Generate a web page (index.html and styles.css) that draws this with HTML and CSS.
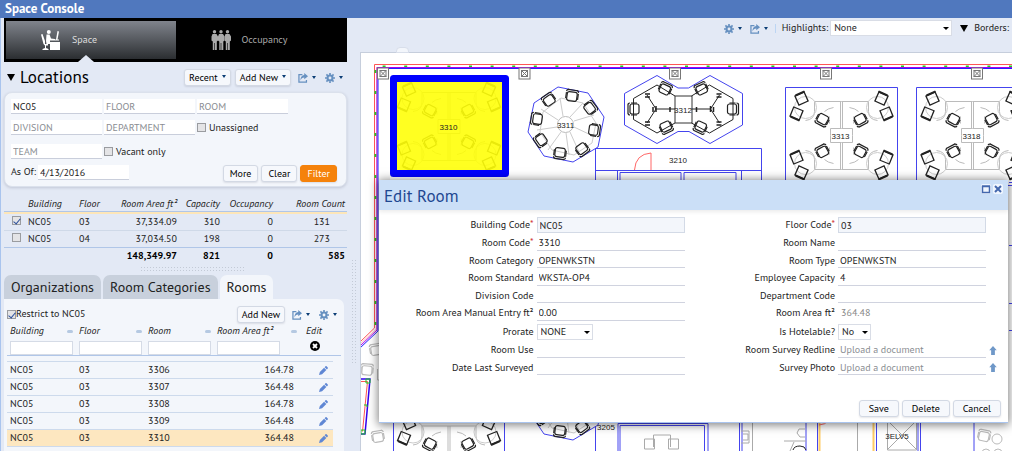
FILE: index.html
```html
<!DOCTYPE html>
<html lang="en">
<head>
    <meta charset="UTF-8">
    <meta name="viewport" content="width=device-width, initial-scale=1.0">
    <title>Space Console</title>
    <link rel="stylesheet" href="styles.css">
</head>
<body>
    <!-- Shared icons -->
    <svg class="sprite" aria-hidden="true">
        <symbol id="icon-gear" viewBox="0 0 16 16">
            <circle cx="8" cy="8" r="4" fill="none" stroke="currentColor" stroke-width="3.4"/>
            <path d="M8 0v3M8 13v3M0 8h3M13 8h3M2.3 2.3l2.2 2.2M11.5 11.5l2.2 2.2M13.7 2.3l-2.2 2.2M4.5 11.5l-2.2 2.2" stroke="currentColor" stroke-width="2.6"/>
        </symbol>
        <symbol id="icon-share" viewBox="0 0 16 16">
            <path d="M7 2.5H1.500v12h12V11" fill="none" stroke="currentColor" stroke-width="2"/>
            <path d="M10 0l6 5-6 5V7C7 7 5 8.500 4 12 3.500 7 6 3.500 10 3z" fill="currentColor"/>
        </symbol>
        <symbol id="icon-pencil" viewBox="0 0 16 16">
            <path d="M0 16l1.500-5.500L9 3l4 4-7.500 7.500zM10 2l1.500-1.500q1-1 2 0L15.500 2.500q1 1 0 2L14 6z" fill="currentColor"/>
        </symbol>
        <symbol id="icon-up" viewBox="0 0 10 12">
            <path d="M5 0l5 5.500H7.500V12h-5V5.500H0z" fill="currentColor"/>
        </symbol>
    </svg>

    <header class="titlebar">
        <h1>Space Console</h1>
    </header>

    <div class="console">
        <aside class="sidebar">
            <nav class="modes">
                <a href="#space" class="mode active">
                    <svg class="mode-icon" viewBox="0 0 20 20">
                        <circle cx="7.800" cy="2" r="2" fill="#fff"/>
                        <path d="M5.500 4.500h3l1.500 4 4 .5v1.500L9 10.500V12h3v7.500h-1.500V14H5.500L5 11z" fill="#fff"/>
                        <path d="M0 4.500l1.500-.5L4 11v3h3v1.500H5V18l2.500 1v1H1.500v-1L4 18v-2.500L2.500 14z" fill="#fff"/>
                        <path d="M9 12h10v8H9zM16.500 1l1.500.5-1.500 8h1.500v1h-4v-1h1z" fill="#fff"/>
                    </svg>
                    <span>Space</span>
                </a>
                <a href="#occupancy" class="mode">
                    <svg class="mode-icon" viewBox="0 0 20 20">
                        <g id="person" fill="#aaa">
                            <circle cx="3.500" cy="1.800" r="1.700"/>
                            <path d="M1.500 4h4L7 6.500v4l-1.200 1V20H1.800v-8.500L.5 10.500v-4z"/>
                        </g>
                        <use href="#person" x="6.500"/>
                        <use href="#person" x="13"/>
                        <path d="M3.500 13v7M10 13v7M16.500 13v7" stroke="#000" stroke-width=".6"/>
                    </svg>
                    <span>Occupancy</span>
                </a>
            </nav>

            <div class="section-head">
                <h2><span class="collapse"></span>Locations</h2>
                <button class="btn menu">Recent</button>
                <button class="btn menu">Add New</button>
                <button class="tool menu" aria-label="Export"><svg><use href="#icon-share"/></svg></button>
                <button class="tool menu" aria-label="Options"><svg><use href="#icon-gear"/></svg></button>
            </div>

            <form class="filter">
                <div class="filter-row">
                    <input type="text" value="NC05" aria-label="Building">
                    <input type="text" placeholder="FLOOR" aria-label="Floor">
                    <input type="text" placeholder="ROOM" aria-label="Room">
                </div>
                <div class="filter-row">
                    <input type="text" placeholder="DIVISION" aria-label="Division">
                    <input type="text" placeholder="DEPARTMENT" aria-label="Department">
                    <label class="check"><input type="checkbox"> Unassigned</label>
                </div>
                <div class="filter-row team">
                    <input type="text" placeholder="TEAM" aria-label="Team">
                    <label class="check"><input type="checkbox"> Vacant only</label>
                </div>
                <div class="filter-row actions">
                    <label for="as-of">As Of:</label>
                    <input type="text" id="as-of" value="4/13/2016">
                    <span class="spacer"></span>
                    <button type="button" class="btn">More</button>
                    <button type="button" class="btn">Clear</button>
                    <button type="button" class="btn primary">Filter</button>
                </div>
            </form>

            <table class="locations">
                <colgroup>
                    <col class="c-check"><col class="c-building"><col class="c-floor"><col class="c-area"><col class="c-capacity"><col class="c-occupancy"><col>
                </colgroup>
                <thead>
                    <tr><th></th><th>Building</th><th>Floor</th><th class="num">Room Area ft²</th><th class="num">Capacity</th><th class="num">Occupancy</th><th class="num">Room Count</th></tr>
                </thead>
                <tbody>
                    <tr><td><input type="checkbox" checked aria-label="NC05 floor 03"></td><td>NC05</td><td>03</td><td class="num">37,334.09</td><td class="num">310</td><td class="num">0</td><td class="num">131</td></tr>
                    <tr><td><input type="checkbox" aria-label="NC05 floor 04"></td><td>NC05</td><td>04</td><td class="num">37,034.50</td><td class="num">198</td><td class="num">0</td><td class="num">273</td></tr>
                </tbody>
                <tfoot>
                    <tr><td></td><td></td><td></td><td class="num">148,349.97</td><td class="num">821</td><td class="num">0</td><td class="num">585</td></tr>
                </tfoot>
            </table>

            <div class="grip-row"></div>

            <nav class="tabs">
                <a href="#organizations">Organizations</a>
                <a href="#categories">Room Categories</a>
                <a href="#rooms" class="active">Rooms</a>
            </nav>

            <section class="rooms">
                <div class="rooms-head">
                    <label class="check"><input type="checkbox" checked>Restrict to NC05</label>
                    <span class="spacer"></span>
                    <button class="btn">Add New</button>
                    <button class="tool menu" aria-label="Export"><svg><use href="#icon-share"/></svg></button>
                    <button class="tool menu" aria-label="Options"><svg><use href="#icon-gear"/></svg></button>
                </div>
                <table class="room-list">
                    <colgroup>
                        <col class="r-col"><col class="r-col"><col class="r-col"><col class="r-area"><col><col class="r-end">
                    </colgroup>
                    <thead>
                        <tr>
                            <th><div class="col-name">Building<i></i></div><input type="text" aria-label="Filter building"></th>
                            <th><div class="col-name">Floor<i></i></div><input type="text" aria-label="Filter floor"></th>
                            <th><div class="col-name">Room<i></i></div><input type="text" aria-label="Filter room"></th>
                            <th><div class="col-name">Room Area ft²<i></i></div><input type="text" aria-label="Filter room area"></th>
                            <th><div class="col-name edit">Edit</div><button class="clear" aria-label="Clear filters"><svg viewBox="0 0 10 10"><circle cx="5" cy="5" r="5"/><path d="M3 3l4 4M7 3L3 7" stroke="#fff" stroke-width="1.800"/></svg></button></th>
                            <th></th>
                        </tr>
                    </thead>
                    <tbody>
                        <tr class="gap"><td colspan="5"></td><td></td></tr>
                        <tr><td>NC05</td><td>03</td><td>3306</td><td class="num">164.78</td><td><button class="edit-btn" aria-label="Edit 3306"><svg><use href="#icon-pencil"/></svg></button></td><td></td></tr>
                        <tr><td>NC05</td><td>03</td><td>3307</td><td class="num">364.48</td><td><button class="edit-btn" aria-label="Edit 3307"><svg><use href="#icon-pencil"/></svg></button></td><td></td></tr>
                        <tr><td>NC05</td><td>03</td><td>3308</td><td class="num">164.78</td><td><button class="edit-btn" aria-label="Edit 3308"><svg><use href="#icon-pencil"/></svg></button></td><td></td></tr>
                        <tr><td>NC05</td><td>03</td><td>3309</td><td class="num">364.48</td><td><button class="edit-btn" aria-label="Edit 3309"><svg><use href="#icon-pencil"/></svg></button></td><td></td></tr>
                        <tr class="selected"><td>NC05</td><td>03</td><td>3310</td><td class="num">364.48</td><td><button class="edit-btn" aria-label="Edit 3310"><svg><use href="#icon-pencil"/></svg></button></td><td></td></tr>
                    </tbody>
                </table>
            </section>
        </aside>

        <div class="splitter"><span></span></div>

        <main class="drawing">
            <div class="toolbar">
                <button class="tool menu" aria-label="Options"><svg><use href="#icon-gear"/></svg></button>
                <button class="tool menu" aria-label="Export"><svg><use href="#icon-share"/></svg></button>
                <span class="divider"></span>
                <div class="highlight">
                    <label for="highlights">Highlights:</label>
                    <span class="select wide"><select id="highlights"><option>None</option></select></span>
                </div>
                <span class="collapse"></span>
                <span>Borders:</span>
            </div>
            <span class="handle"></span>

            <div class="plan">
                <svg viewBox="361 53 651 398" preserveAspectRatio="xMinYMin slice" role="img" aria-label="Floor plan">
                    <defs>
                        <g id="chair" fill="none" stroke-width="1.200">
                            <rect x="-5" y="-4" width="10" height="9" rx="2"/>
                            <path d="M-6-3v6M6-3v6M-5-6h10M-6-4q0-2 2-2M6-4q0-2-2-2"/>
                        </g>
                        <g id="quarter">
                            <path d="M-1-7v-27M-11-7V0M-11-7H0M-27-34H0M-27-34v10q0 8-9 9M-8-28q-6 1-9 4M-12-12q-1-4 0-7" stroke="#bbb" fill="none"/>
                            <circle cx="-36" cy="-28" r="11" stroke="#ccc" fill="none"/>
                            <g fill="none" stroke-width="1.300">
                                <rect x="-5" y="-5" width="10" height="10" transform="translate(-40-37) rotate(-24)"/>
                                <rect x="-5" y="-5" width="10" height="10" transform="translate(-45-22) rotate(22)"/>
                                <path d="M-46-40l9-4M-51-19l9 4" stroke-width="2"/>
                                <use href="#chair" transform="translate(-19-16) rotate(-152)"/>
                            </g>
                        </g>
                        <g id="pod">
                            <use href="#quarter"/>
                            <use href="#quarter" transform="scale(-1 1)"/>
                            <use href="#quarter" transform="scale(1 -1)"/>
                            <use href="#quarter" transform="scale(-1 -1)"/>
                        </g>
                        <g id="column" fill="#fff" stroke="#777">
                            <rect x="-5.500" y="-5.500" width="11" height="11"/>
                            <rect x="-3" y="-3" width="6" height="6"/>
                            <path d="M-3-3l6 6M3-3l-6 6"/>
                        </g>
                        <g id="wing" fill="none" stroke="#222">
                            <path d="M675 96l-18-11-23.500 13.500v21L657 133l18-10M656 109l-9-14M656 109l-9 14M656 109h19"/>
                            <path d="M645 94h5M645 97h5M645 122h5M645 125h5M653 107v5M656 106v6M670 107v5" stroke-width="1.500"/>
                            <use href="#chair" transform="translate(634 109) rotate(-90)"/>
                            <use href="#chair" transform="translate(665 89) rotate(25)"/>
                            <use href="#chair" transform="translate(666 127) rotate(155)"/>
                        </g>
                        <g id="round">
                            <path d="M558 87l30 6 16 24-6 30-25 15-29-6-16-24 6-29z" fill="#fff" stroke="#44e"/>
                            <path d="M561 98l22 5 13 20-4 20-18 12-22-5-12-18 3-20zM563 116l-3-18M570 117l13-14M574 121l20-6M574 127l19 9M570 132l9 20M566 133l3 22M561 132l-13 18M557 127l-20 3M558 120l-17-11" fill="none" stroke="#ccc"/>
                            <circle cx="565.500" cy="124.500" r="8" fill="#fff" stroke="#bbb"/>
                            <g stroke="#222">
                                <use href="#chair" transform="translate(572 96) rotate(8)"/>
                                <use href="#chair" transform="translate(590 108) rotate(53)"/>
                                <use href="#chair" transform="translate(594 130) rotate(98)"/>
                                <use href="#chair" transform="translate(582 149) rotate(143)"/>
                                <use href="#chair" transform="translate(560 153) rotate(187)"/>
                                <use href="#chair" transform="translate(541 140) rotate(235)"/>
                                <use href="#chair" transform="translate(537 119) rotate(278)"/>
                                <use href="#chair" transform="translate(549 100) rotate(325)"/>
                            </g>
                        </g>
                    </defs>

                    <!-- Exterior walls -->
                    <g fill="none">
                        <path d="M1012 64.500H374.500V328L360 342" stroke="#f55"/>
                        <path d="M376.500 67V329L360 344" stroke="#fbb"/>
                        <path d="M1012 66.500H376" stroke="#2c2" stroke-width="2" stroke-dasharray="3 18.600"/>
                        <path d="M375.500 70V330" stroke="#2c2" stroke-width="2" stroke-dasharray="3 18"/>
                        <path d="M1012 67.500H377V330L360 346" stroke="#a0e"/>
                        <path d="M1012 68.500H378V331L360 348" stroke="#22f"/>
                        <path d="M360 379h10l-5 55h-5" stroke="#30e" stroke-width="1.500"/>
                        <path d="M360 381.500h7.500l-5 50" stroke="#f55"/>
                        <path d="M366 379h4v4h-4zM361 430h4v4h-4zM364 405h3v2" stroke="#2c2"/>
                    </g>
                    <use href="#column" x="383" y="73.500"/>
                    <use href="#column" x="524.500" y="73.500"/>
                    <use href="#column" x="675" y="73.500"/>
                    <use href="#column" x="826" y="73.500"/>
                    <use href="#column" x="977" y="73.500"/>

                    <!-- Selected room -->
                    <rect x="394" y="79" width="111" height="94" fill="#fff"/>
                    <use href="#pod" x="449" y="126.500" stroke="#555"/>
                    <rect x="394" y="79" width="111" height="94" fill="#ff0" fill-opacity=".87"/>
                    <rect x="393.500" y="78.500" width="112" height="95" fill="none" stroke="#00f" stroke-width="7" stroke-linejoin="round"/>

                    <use href="#round"/>

                    <path d="M624.500 93.500L657 75.500l21 12.500h10.500L710 75.500l32.500 18V125L710 143.500l-21-12h-11l-21 12-32.500-18.500z" fill="#fff" stroke="#44e"/>
                    <use href="#wing"/>
                    <use href="#wing" transform="translate(1366.500 0) scale(-1 1)"/>
                    <path d="M675 96h17v27h-17z" fill="none" stroke="#333"/>

                    <!-- Room 3210 and offices below it -->
                    <path d="M595.500 451V148.500h166V185M595.500 170.500h166M617.500 170v15M741.500 170v15M620 185v-12.500h61V185M684 185v-12.500h52V185" fill="none" stroke="#44e"/>
                    <path d="M634.500 170q1-16 16.500-17v17" fill="none" stroke="#f66"/>

                    <path d="M785.500 87.500h112v98h-112zM1012 87.500h-95.500v98h96" fill="none" stroke="#44e"/>
                    <g stroke="#222">
                        <use href="#pod" x="841.500" y="135.500"/>
                        <use href="#pod" x="972.500" y="135.500"/>
                        <use href="#pod" x="449" y="460"/>
                    </g>

                    <!-- South side -->
                    <path d="M393.500 415v36M504.500 415v36M618 451v-27.500h90V451M620 451v-25.500h84.500V451M739.500 415v36M742 415v36M806 415v36M817.500 415v36M876.500 415v36M918 415v36M920.500 415v36M974 415v36" fill="none" stroke="#44e"/>
                    <path d="M1009 182.500h3M1009 245.500h3M1009 303.500h3M1009 330.500h3" stroke="#44e"/>
                    <use href="#round" y="278"/>
                    <path d="M819.500 415v36M873.500 415v36" stroke="#fc6" stroke-width="2"/>
                    <path d="M752.500 415v36M857.500 415v36M887.500 420v30h29v-30zM888 421l28 28M916 421l-28 28M653.500 447v-12h17v12M644.500 439h10v10h-10zM668.500 439h10v10h-10zM741 431h8v12h-8M743 434h5v6h-5M805 429h-6l-2 4 3 4h5M784 441h22M790 451l4-9" fill="none" stroke="#aaa"/>
                    <path d="M793 450q1-4 7-4 5 0 6 4" fill="none" stroke="#222"/>
                    <path d="M819 425q6 0 10-5" fill="none" stroke="#f66"/>
                    <g stroke="#bbb" fill="none">
                        <use href="#chair" transform="translate(376 350) rotate(-10)"/>
                        <use href="#chair" transform="translate(367 370) rotate(5)"/>
                        <use href="#chair" transform="translate(378 437) rotate(-10)"/>
                        <use href="#chair" transform="translate(984 436) rotate(12)"/>
                        <circle cx="997" cy="439" r="5"/>
                        <circle cx="986" cy="453" r="4"/>
                        <circle cx="998" cy="453" r="4"/>
                        <path d="M377.500 369v11h4"/>
                    </g>

                    <g class="room-no">
                        <text x="448.500" y="130">3310</text>
                        <text x="565.500" y="128">3311</text>
                        <text x="683" y="113">3312</text>
                        <text x="678" y="163">3210</text>
                        <text x="840.500" y="139">3313</text>
                        <text x="971.500" y="139">3318</text>
                        <text x="606" y="430">3205</text>
                        <text x="897" y="439">3ELV5</text>
                    </g>
                </svg>
            </div>
        </main>
    </div>

    <form class="dialog" role="dialog" aria-labelledby="dialog-title">
        <header>
            <h2 id="dialog-title">Edit Room</h2>
            <button type="button" aria-label="Maximize"><svg viewBox="0 0 10 10"><path d="M1.500 2.500h7v6h-7zM1 2h8" fill="none" stroke="#4468ae" stroke-width="1.500"/></svg></button>
            <button type="button" aria-label="Close"><svg viewBox="0 0 10 10"><path d="M2 2l6 6M8 2L2 8" stroke="#4468ae" stroke-width="2"/></svg></button>
        </header>
        <div class="fields">
            <div class="col">
                <label for="bl">Building Code<sup>*</sup></label><input id="bl" class="locked" value="NC05" readonly>
                <label for="rm">Room Code<sup>*</sup></label><input id="rm" value="3310">
                <label for="cat">Room Category</label><input id="cat" value="OPENWKSTN">
                <label for="std">Room Standard</label><input id="std" value="WKSTA-OP4">
                <label for="dv">Division Code</label><input id="dv">
                <label for="area">Room Area Manual Entry ft²</label><input id="area" value="0.00">
                <label for="prorate">Prorate</label><span class="select"><select id="prorate"><option>NONE</option></select></span>
                <label for="use">Room Use</label><input id="use">
                <label for="date">Date Last Surveyed</label><input id="date">
            </div>
            <div class="col">
                <label for="fl">Floor Code<sup>*</sup></label><input id="fl" class="locked" value="03" readonly>
                <label for="name">Room Name</label><input id="name">
                <label for="type">Room Type</label><input id="type" value="OPENWKSTN">
                <label for="cap">Employee Capacity</label><input id="cap" value="4">
                <label for="dp">Department Code</label><input id="dp">
                <label for="area2">Room Area ft²</label><output id="area2">364.48</output>
                <label for="hotel">Is Hotelable?</label><span class="select short"><select id="hotel"><option>No</option></select></span>
                <label for="redline">Room Survey Redline</label><input id="redline" placeholder="Upload a document"><button type="button" class="upload" aria-label="Upload redline"><svg><use href="#icon-up"/></svg></button>
                <label for="photo">Survey Photo</label><input id="photo" placeholder="Upload a document"><button type="button" class="upload" aria-label="Upload photo"><svg><use href="#icon-up"/></svg></button>
            </div>
        </div>
        <footer>
            <button type="button" class="btn">Save</button>
            <button type="button" class="btn">Delete</button>
            <button type="button" class="btn">Cancel</button>
        </footer>
    </form>
</body>
</html>
```
FILE: styles.css
```css
* {
    box-sizing: border-box;
}

body {
    margin: 0;
    height: 100vh;
    display: flex;
    flex-direction: column;
    overflow: hidden;
    font-family: "PT Sans", Lato, sans-serif;
    font-size: 10px;
    line-height: 14px;
    color: #222;
    background: #e3e9f5;
}

h1, h2 {
    margin: 0;
    font-weight: normal;
}

button, input, select {
    font: inherit;
    color: inherit;
    margin: 0;
    padding: 0;
    border: none;
    background: none;
    border-radius: 0;
}

.sprite {
    display: none;
}

.spacer {
    flex: 1;
}

/* Title bar */
.titlebar {
    flex: none;
    height: 18px;
    padding: 0 5px;
    background: #5078be;
    color: white;
}

.titlebar h1 {
    font-size: 13px;
    line-height: 18px;
    font-weight: bold;
}

.console {
    flex: 1;
    min-height: 0;
    display: flex;
}

/* Sidebar */
.sidebar {
    flex: none;
    width: 347px;
    padding-left: 3px;
    border-left: 1px solid #a9c4ee;
}

.modes {
    display: flex;
    height: 44px;
    padding: 3px 2px;
    background: black;
}

.mode {
    position: relative;
    flex: 1;
    display: flex;
    align-items: center;
    gap: 11px;
    padding-left: 35px;
    color: #aaa;
    text-decoration: none;
}

.mode.active {
    color: #ddd;
    background: linear-gradient(#80848c, #2b2e31);
}

.mode.active::after {
    content: "";
    position: absolute;
    left: 72px;
    bottom: -3px;
    border: 8px solid transparent;
    border-top: none;
    border-bottom: 7px solid #e3e9f5;
}

.mode-icon {
    width: 20px;
    height: 20px;
}

.section-head {
    display: flex;
    align-items: center;
    gap: 4px;
    height: 30px;
    padding-right: 2px;
}

.section-head h2 {
    flex: 1;
    display: flex;
    align-items: center;
    gap: 5px;
    padding-left: 3px;
    font-size: 17px;
    line-height: 24px;
    color: black;
}

.collapse {
    border: 4px solid transparent;
    border-top: 7px solid black;
    border-bottom: none;
}

.btn {
    height: 17px;
    padding: 0 7px;
    line-height: 15px;
    color: black;
    background: #f6f8fc;
    border: 1px solid #d3d9e4;
    border-radius: 3px;
    box-shadow: 0 1px 2px rgba(0, 0, 40, 0.1);
    white-space: nowrap;
}

.section-head .btn {
    padding: 0 4px;
}

.btn.primary {
    color: white;
    background: #f5820b;
    border-color: #f5820b;
}

.menu::after {
    content: "";
    display: inline-block;
    margin-left: 4px;
    vertical-align: 3px;
    border: 2px solid transparent;
    border-top: 3px solid #0b3d75;
    border-bottom: none;
}

.tool {
    flex: none;
    width: 23px;
    height: 14px;
    line-height: 12px;
    color: #6690c0;
    white-space: nowrap;
}

.tool.menu::after {
    vertical-align: middle;
}

.tool svg {
    width: 10px;
    height: 10px;
    vertical-align: middle;
}

/* Filter */
.filter {
    display: flex;
    flex-direction: column;
    gap: 6px;
    height: 95px;
    padding: 6px 9px 6px 6px;
    background: #f3f6fb;
    border: 1px solid #dbe1ec;
    border-radius: 8px;
    box-shadow: 0 1px 3px rgba(0, 0, 40, 0.15);
}

.filter-row {
    display: flex;
    gap: 2px;
}

.filter-row.team {
    margin-top: 3px;
}

.filter-row input[type="text"] {
    width: 91px;
    height: 15px;
    padding: 0 2px;
    background: white;
    border-bottom: 1px solid #c9cedb;
}

.filter-row.actions .btn {
    margin-left: 1px;
    padding: 0 6px;
}

::placeholder {
    color: #8a8d92;
    opacity: 1;
}

.check {
    display: flex;
    align-items: center;
    gap: 3px;
}

input[type="checkbox"] {
    appearance: none;
    position: relative;
    width: 9px;
    height: 9px;
    background: #e4e4e6;
    border: 1px solid #9a9ca0;
}

input[type="checkbox"]:checked::after {
    content: "";
    position: absolute;
    left: 2px;
    top: 0;
    width: 3px;
    height: 6px;
    border: solid #2a4f9c;
    border-width: 0 1px 1px 0;
    transform: rotate(40deg);
}

/* Location totals */
table {
    width: 100%;
    table-layout: fixed;
    border-collapse: separate;
    border-spacing: 0;
}

th, td {
    padding: 0;
    text-align: left;
    white-space: nowrap;
}

th {
    font-weight: normal;
    font-style: italic;
}

.num {
    text-align: right;
}

.locations {
    margin-top: 10px;
}

.c-check { width: 24px; }
.c-building { width: 51px; }
.c-floor { width: 35px; }
.c-area { width: 63px; }
.c-capacity { width: 43px; }
.c-occupancy { width: 53px; }

.locations th {
    height: 14px;
    border-bottom: 1px solid #b0c6e8;
}

.locations th:last-child,
.locations tfoot td:last-child {
    padding-right: 2px;
}

.locations tbody td {
    height: 17px;
    border-bottom: 1px solid #cfd9e8;
}

.locations tbody tr:first-child td {
    height: 19px;
    border-top: 2px solid #fde6b8;
}

.locations tbody td:first-child {
    padding-left: 8px;
}

.locations tbody td:last-child {
    padding-right: 17px;
}

.locations tbody tr:last-child td {
    border-bottom-color: #b0c6e8;
}

.locations tfoot td {
    height: 15px;
    color: black;
    font-weight: bold;
}

.grip-row {
    width: 105px;
    height: 5px;
    margin: 3px auto 4px 136px;
    background: radial-gradient(circle, #c3cad6 1px, transparent 1px) 0 0 / 3px 3px;
}

/* Tabs */
.tabs {
    display: flex;
    gap: 2px;
}

.tabs a {
    padding: 0 7px;
    font-size: 14px;
    line-height: 24px;
    color: #222;
    text-decoration: none;
    background: #c8d0dc;
    border-radius: 7px 7px 0 0;
}

.tabs a.active {
    background: #f3f6fb;
}

/* Rooms */
.rooms {
    height: 160px;
    margin-right: 3px;
    padding: 5px 3px 0;
    background: #f3f6fb;
    border-radius: 0 7px 0 0;
}

.rooms-head {
    display: flex;
    align-items: center;
    gap: 4px;
    height: 20px;
    padding-right: 2px;
}

.rooms-head .check {
    gap: 0;
}

.rooms-head .btn {
    padding: 0 4px;
}

.r-col { width: 69px; }
.r-area { width: 86px; }
.r-end { width: 8px; }

.room-list th {
    height: 31px;
    vertical-align: top;
    padding-left: 3px;
    border-bottom: 1px solid #b0c6e8;
}

.room-list th:last-child {
    padding: 0;
}

.col-name {
    display: flex;
    align-items: center;
    justify-content: space-between;
    height: 14px;
    margin-bottom: 3px;
}

.col-name i {
    width: 6px;
    height: 3px;
    margin-right: 3px;
    border-radius: 2px;
    background: #b5c9e2;
}

.room-list th input {
    display: block;
    width: 63px;
    height: 14px;
    background: white;
    border: 1px solid #d5dbe6;
}

.clear {
    display: block;
    width: 10px;
    height: 10px;
    margin: 1px 7px;
}

.clear svg {
    display: block;
}

.edit {
    padding-left: 3px;
}

.room-list td {
    height: 17px;
    padding-left: 3px;
    border-bottom: 1px solid #cddaec;
}

.room-list .gap td {
    height: 6px;
}

.room-list td:last-child {
    border: none;
}

.room-list td.num {
    padding-right: 6px;
}

.room-list .selected td:not(:last-child) {
    background: #fde7c0;
}

.edit-btn {
    display: block;
    width: 9px;
    height: 10px;
    margin-left: 16px;
    color: #5f87d4;
}

.edit-btn svg {
    display: block;
    width: 9px;
    height: 9px;
}

/* Splitter */
.splitter {
    flex: none;
    width: 13px;
    display: flex;
    align-items: center;
    justify-content: center;
    padding-top: 154px;
}

.splitter span {
    width: 5px;
    height: 105px;
    background: radial-gradient(circle, #c3cad6 1px, transparent 1px) 0 0 / 3px 3px;
}

/* Drawing */
.drawing {
    position: relative;
    flex: 1;
    min-width: 0;
    display: flex;
    flex-direction: column;
}

.toolbar {
    display: flex;
    align-items: center;
    justify-content: flex-end;
    gap: 6px;
    height: 34px;
    padding: 0 3px 14px;
}

.toolbar .tool {
    width: 20px;
}

.highlight {
    display: flex;
    align-items: center;
    gap: 2px;
    margin-right: 2px;
}

.divider {
    width: 1px;
    height: 9px;
    background: #bcd5f3;
}

.handle {
    position: absolute;
    left: 36px;
    top: 29px;
    width: 13px;
    height: 6px;
    background: #f3f6fb;
    border: 1px solid #d8deea;
    border-radius: 4px 4px 0 0;
}

.plan {
    flex: 1;
    min-height: 0;
    background: white;
    border: solid #c6cedc;
    border-width: 1px 0 0 1px;
}

.plan svg {
    display: block;
    width: 100%;
    height: 100%;
}

.room-no {
    font-family: "Liberation Sans", Arial, sans-serif;
    font-size: 8px;
    text-anchor: middle;
    fill: #222;
}

/* Drop-downs */
.select {
    position: relative;
    width: 56px;
    height: 16px;
}

.select.short {
    width: 33px;
}

.select.wide {
    width: 122px;
}

.select select {
    appearance: none;
    display: block;
    width: 100%;
    height: 100%;
    padding: 0 3px;
    background: white;
    border: 1px solid #d9dde6;
}

.select::after {
    content: "";
    position: absolute;
    right: 3px;
    top: 7px;
    border: 3px solid transparent;
    border-top: 3px solid black;
    border-bottom: none;
    pointer-events: none;
}

/* Edit dialog */
.dialog {
    position: absolute;
    left: 379px;
    right: 4px;
    top: 180px;
    background: white;
    border-bottom: 1px solid #a9c4ee;
    box-shadow: 0 1px 9px 1px rgba(0, 0, 0, 0.5);
}

.dialog header {
    display: flex;
    gap: 2px;
    height: 30px;
    padding: 4px 5px 0;
    background: #cbdff7;
    box-shadow: 0 2px 4px rgba(0, 0, 0, 0.08);
}

.dialog header h2 {
    flex: 1;
    font-size: 17px;
    line-height: 24px;
    color: #1f4791;
}

.dialog header button {
    width: 10px;
    height: 10px;
    background: #f0f6fe;
    border-radius: 2px;
}

.dialog header svg {
    display: block;
}

.fields {
    display: flex;
    padding: 6px 5px 0;
}

.col {
    flex: 1;
    display: grid;
    grid-template-columns: 1fr 148px 14px;
    grid-template-rows: 18px 18px 17px 18px 17px 18px 19px 18px 17px;
    column-gap: 3px;
    align-items: center;
}

.col:first-child {
    flex: none;
    width: calc(50% + 8px);
}

.col label {
    grid-column: 1;
    text-align: right;
    white-space: nowrap;
}

.col sup {
    color: #c22;
    font-size: 10px;
    line-height: 0;
    vertical-align: 1px;
}

.col input {
    width: 148px;
    height: 15px;
    padding: 0 2px;
    border-bottom: 1px solid #d0d3df;
}

.col input.locked {
    height: 16px;
    background: #f3f6fb;
    border: 1px solid #d3dae6;
}

.col output {
    padding: 0 3px;
    color: #888;
}

.upload {
    width: 8px;
    height: 9px;
    color: #6f98c8;
}

.upload svg {
    display: block;
    width: 8px;
    height: 9px;
}

.dialog footer {
    display: flex;
    justify-content: flex-end;
    gap: 3px;
    padding: 24px 7px 5px;
}

.dialog footer .btn {
    padding: 0 9px;
}
```
